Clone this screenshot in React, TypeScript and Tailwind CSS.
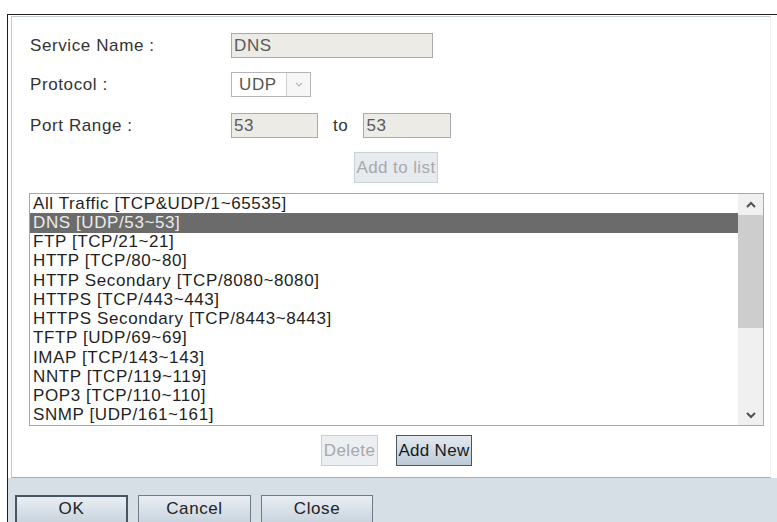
const services = [
  "All Traffic [TCP&UDP/1~65535]",
  "DNS [UDP/53~53]",
  "FTP [TCP/21~21]",
  "HTTP [TCP/80~80]",
  "HTTP Secondary [TCP/8080~8080]",
  "HTTPS [TCP/443~443]",
  "HTTPS Secondary [TCP/8443~8443]",
  "TFTP [UDP/69~69]",
  "IMAP [TCP/143~143]",
  "NNTP [TCP/119~119]",
  "POP3 [TCP/110~110]",
  "SNMP [UDP/161~161]",
];

const selected = "DNS [UDP/53~53]";

function Chevron({ up = false, className = "" }: { up?: boolean; className?: string }) {
  return (
    <svg width="10" height="7" viewBox="0 0 10 7" className={className}>
      <polyline
        points={up ? "1,6 5,2 9,6" : "1,1 5,5 9,1"}
        fill="none"
        stroke="currentColor"
        strokeWidth="2"
      />
    </svg>
  );
}

function Field({ label, children }: { label: string; children: React.ReactNode }) {
  return (
    <div className="flex items-center">
      <span className="w-[201px] shrink-0 text-[#333]">{label}</span>
      {children}
    </div>
  );
}

function ReadOnlyInput({ value, width }: { value: string; width: string }) {
  return (
    <div
      className={`${width} flex h-[25px] items-center border border-[#aaa] bg-[#ecebe6] pl-[2px] text-[#5a5a5a]`}
    >
      {value}
    </div>
  );
}

export default function App() {
  return (
    <div className="h-[522px] w-[777px] overflow-hidden bg-white pl-[7px] pt-[14px] font-['Liberation_Sans',Arial,sans-serif] text-[17px] leading-[18px] tracking-[0.6px]">
      <div className="flex h-full flex-col border-l border-t border-[#1d1d1d]">
        {/* Service editor */}
        <div className="pl-[3px] pr-[6px] pt-[1px]">
          <div className="flex flex-col border-b border-l border-r border-t border-b-[#a3adb5] border-l-[#c3cad0] border-r-[#eef1f3] border-t-[#c3cad0] pl-[18px] pt-[16px] pb-[11px]">
            <Field label="Service Name :">
              <ReadOnlyInput value="DNS" width="w-[202px]" />
            </Field>

            <div className="mt-[14px]">
              <Field label="Protocol :">
                <div className="flex h-[25px] w-[80px] border border-[#b5b5b5] bg-white text-[#555]">
                  <span className="flex flex-1 items-center pl-[7px]">UDP</span>
                  <span className="flex w-[24px] items-center justify-center border-l border-[#d0d0d0] bg-[#f6f6f6] text-[#b5b5b5]">
                    <svg width="8" height="5" viewBox="0 0 8 5">
                      <polyline points="1,1 4,4 7,1" fill="none" stroke="currentColor" strokeWidth="1.2" />
                    </svg>
                  </span>
                </div>
              </Field>
            </div>

            <div className="mt-[16px]">
              <Field label="Port Range :">
                <ReadOnlyInput value="53" width="w-[87px]" />
                <span className="ml-[15px] mr-[15px] text-[#333]">to</span>
                <ReadOnlyInput value="53" width="w-[88px]" />
              </Field>
            </div>

            <div className="mt-[14px] pl-[324px]">
              <button className="flex h-[31px] w-[84px] items-center justify-center whitespace-nowrap border border-[#c8d0d7] bg-[#e6ebf0] tracking-[0.4px] text-[#a9a9a9]">
                Add to list
              </button>
            </div>

            {/* Service list */}
            <div className="ml-[-1px] mt-[10px] flex h-[233px] w-[735px] border border-[#a8a8a8] bg-white">
              <ul className="flex-1 overflow-hidden">
                {services.map((s) => (
                  <li
                    key={s}
                    className={`flex h-[19.25px] items-center whitespace-nowrap pl-[3px] ${
                      s === selected ? "bg-[#6b6b6b] text-[#ececec]" : "text-[#1f1f1f]"
                    }`}
                  >
                    {s}
                  </li>
                ))}
              </ul>
              <div className="flex w-[25px] flex-col bg-[#f0f0f0]">
                <div className="flex h-[21px] items-center justify-center text-[#505050]">
                  <Chevron up />
                </div>
                <div className="h-[113px] bg-[#cdcdcd]" />
                <div className="flex-1" />
                <div className="flex h-[20px] items-center justify-center text-[#505050]">
                  <Chevron />
                </div>
              </div>
            </div>

            <div className="ml-[-1px] mt-[9px] flex w-[735px] justify-center gap-[18px]">
              <button className="flex h-[31px] w-[57px] items-center justify-center border border-[#c9cfd5] bg-[#eceff2] tracking-[0.4px] text-[#a8a8a8]">
                Delete
              </button>
              <button className="flex h-[31px] w-[76px] items-center justify-center whitespace-nowrap border border-[#4a5660] bg-gradient-to-b from-[#e3e9ef] to-[#bccad6] tracking-[0.3px] text-[#1a1a1a]">
                Add New
              </button>
            </div>
          </div>
        </div>

        {/* Dialog buttons */}
        <div className="flex flex-1 gap-[10px] bg-[#d6dee6] pl-[7px] pt-[17px]">
          <button className="flex h-[34px] w-[113px] shrink-0 items-start justify-center border-2 border-[#48545f] bg-gradient-to-b from-[#e9eef3] to-[#c3cfda] pt-[3px] text-[#222]">
            OK
          </button>
          <button className="flex h-[34px] w-[113px] shrink-0 items-start justify-center border border-[#6f7c88] bg-gradient-to-b from-[#e9eef3] to-[#c3cfda] pt-[4px] text-[#222]">
            Cancel
          </button>
          <button className="flex h-[34px] w-[112px] shrink-0 items-start justify-center border border-[#6f7c88] bg-gradient-to-b from-[#e9eef3] to-[#c3cfda] pt-[4px] text-[#222]">
            Close
          </button>
        </div>
      </div>
    </div>
  );
}
